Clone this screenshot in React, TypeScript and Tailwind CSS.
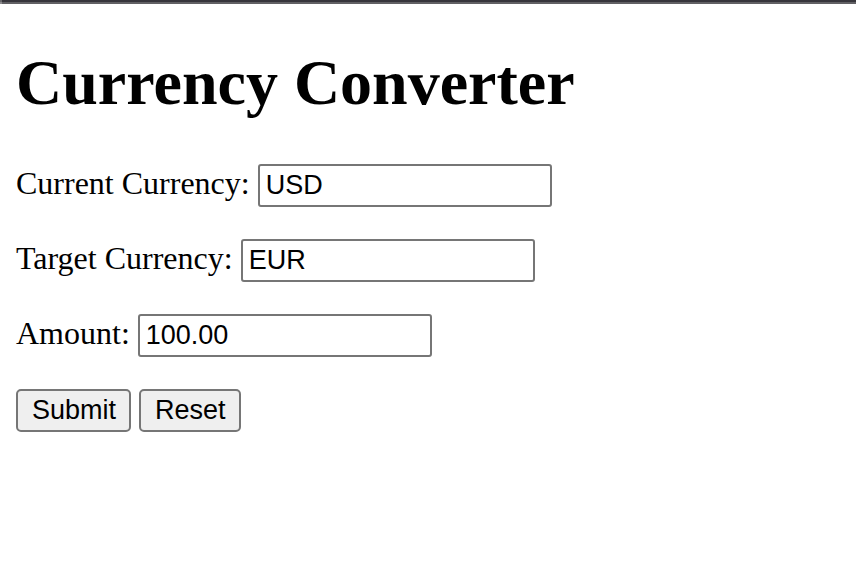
const fields = [
  { id: "current", label: "Current Currency:", value: "USD" },
  { id: "target", label: "Target Currency:", value: "EUR" },
  { id: "amount", label: "Amount:", value: "100.00" },
];

const buttonClass =
  "h-[43px] rounded-[5px] border-2 border-[#767676] bg-[#efefef] pr-[13px] pl-[14px] font-['Liberation_Sans',Arial,sans-serif] text-[27px] leading-[31px] text-black";

export default function App() {
  return (
    <div className="min-h-screen bg-white font-['Liberation_Serif','Times_New_Roman',serif] text-black">
      <div className="flex h-1">
        <div className="w-[2px] border-b-2 border-[#8b8a8d] bg-[#69686c]" />
        <div className="flex-1 border-b-2 border-[#616064] bg-[#36353b]" />
      </div>
      <main className="px-4 pt-[42px]">
        <h1 className="text-[64px] leading-[74px] font-bold">Currency Converter</h1>
        <form className="mt-11 flex flex-col gap-8" onSubmit={(e) => e.preventDefault()}>
          {fields.map((f) => (
            <div key={f.id} className="flex items-baseline gap-2">
              <label htmlFor={f.id} className="text-[32px] leading-[37px]">
                {f.label}
              </label>
              <input
                id={f.id}
                type="text"
                defaultValue={f.value}
                className="h-[43px] w-[294px] rounded-[3px] border-2 border-[#767676] bg-white px-[6px] font-['Liberation_Sans',Arial,sans-serif] text-[27px] leading-[31px] text-black"
              />
            </div>
          ))}
          <div className="flex gap-2">
            <button type="submit" className={buttonClass}>
              Submit
            </button>
            <button type="reset" className={buttonClass}>
              Reset
            </button>
          </div>
        </form>
      </main>
    </div>
  );
}
